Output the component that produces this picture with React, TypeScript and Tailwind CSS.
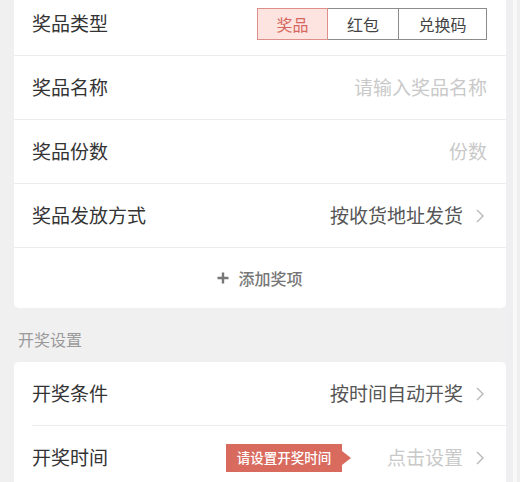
import React from 'react';

const font = { fontFamily: '"Noto Sans CJK SC", "Noto Sans", sans-serif' };

function Chevron() {
  return (
    <svg width="10" height="14" viewBox="0 0 10 14" className="ml-[12px] shrink-0">
      <polyline points="2,1 8,7 2,13" fill="none" stroke="#b8b8b8" strokeWidth="1.4" />
    </svg>
  );
}

function Row({ label, children, inset }: { label: string; children?: React.ReactNode; inset?: boolean }) {
  return (
    <div className={inset ? 'pl-[18px]' : ''}>
      <div
        className={
          'h-[64px] flex items-center justify-between border-b border-[#ebebeb] ' +
          (inset ? 'pr-[19px]' : 'px-[18px] pr-[19px]')
        }
      >
        <span className="text-[19px] text-[#333]">{label}</span>
        <div className="flex items-center">{children}</div>
      </div>
    </div>
  );
}

export default function App() {
  const tabs = ['奖品', '红包', '兑换码'];
  return (
    <div className="w-[520px] h-[482px] overflow-hidden bg-[#f1f0f1] flex" style={font}>
      <div className="w-[506px] pl-[14px] -mt-[8px] shrink-0">
        <div className="bg-white rounded-[5px] w-[492px] overflow-hidden">
          <Row label="奖品类型">
            <div className="flex text-[16px]">
              {tabs.map((t, i) => (
                <div
                  key={t}
                  className={
                    'h-[32px] flex items-center justify-center border ' +
                    (i === 0
                      ? 'w-[71px] relative z-10 border-[#de8f89] bg-[#fde4e1] text-[#d6675d]'
                      : i === 1
                        ? 'w-[72px] -ml-px border-[#8c8c8c] text-[#444]'
                        : 'w-[89px] -ml-px border-[#8c8c8c] text-[#444]')
                  }
                >
                  {t}
                </div>
              ))}
            </div>
          </Row>
          <Row label="奖品名称">
            <span className="text-[19px] text-[#c9c9c9]">请输入奖品名称</span>
          </Row>
          <Row label="奖品份数">
            <span className="text-[19px] text-[#c9c9c9]">份数</span>
          </Row>
          <Row label="奖品发放方式">
            <span className="text-[19px] text-[#555]">按收货地址发货</span>
            <div className="mr-[2px]">
              <Chevron />
            </div>
          </Row>
          <div className="h-[60px] flex items-center justify-center text-[16px] text-[#777] font-medium">
            <svg width="12" height="12" viewBox="0 0 12 12" className="mr-[9px]">
              <path d="M6 0.5V11.5M0.5 6H11.5" stroke="#777" strokeWidth="2.4" />
            </svg>
            添加奖项
          </div>
        </div>

        <div className="h-[54px] pt-[23px] pl-[4px] text-[16px] leading-[16px] text-[#999]">开奖设置</div>

        <div className="bg-white rounded-[5px] w-[492px] overflow-hidden">
          <Row label="开奖条件" inset>
            <span className="text-[19px] text-[#555]">按时间自动开奖</span>
            <div className="mr-[2px]">
              <Chevron />
            </div>
          </Row>
          <Row label="开奖时间" inset>
            <div className="flex items-center mr-[36px]">
              <div className="h-[28px] w-[116px] bg-[#d96a5e] text-white text-[13.5px] font-medium flex items-center justify-center">
                请设置开奖时间
              </div>
              <div className="w-0 h-0 border-y-[7px] border-y-transparent border-l-[9px] border-l-[#d96a5e]" />
            </div>
            <span className="text-[19px] text-[#c9c9c9]">点击设置</span>
            <div className="mr-[2px]">
              <Chevron />
            </div>
          </Row>
        </div>
      </div>
      <div className="flex-1 flex">
        <div className="w-[7px] bg-[#efeef0]" />
        <div className="w-[4px] bg-[#f8f8f8]" />
        <div className="flex-1 bg-[#eeeeee]" />
      </div>
    </div>
  );
}
